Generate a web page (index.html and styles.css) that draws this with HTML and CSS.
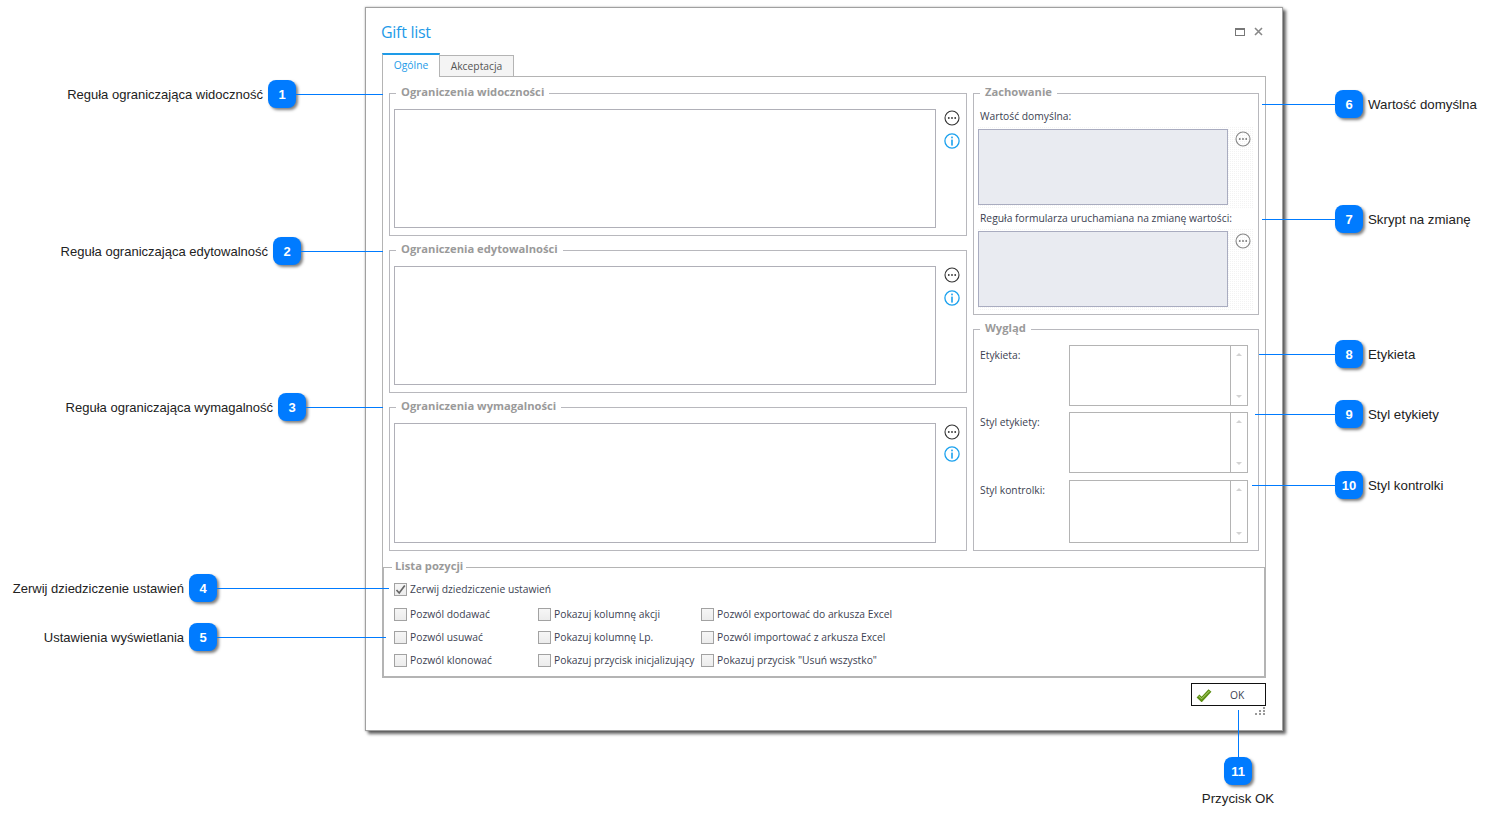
FILE: index.html
```html
<!DOCTYPE html>
<html lang="en">
<head>
    <meta charset="UTF-8">
    <meta name="viewport" content="width=device-width, initial-scale=1.0">
    <title>Gift list</title>
    <link rel="stylesheet" href="styles.css">
</head>
<body>
    <div class="canvas">
        <div class="dialog">
            <div class="dialog-head">
                <h1 class="dialog-title">Gift list</h1>
                <div class="window-buttons">
                    <svg width="10" height="8" viewBox="0 0 10 8"><rect x="0.5" y="0.5" width="9" height="7" fill="none" stroke="#777"/><rect x="0" y="0" width="10" height="2" fill="#777"/></svg>
                    <svg width="9" height="9" viewBox="0 0 9 9"><path d="M1 1 8 8M8 1 1 8" stroke="#888" stroke-width="1.6" fill="none"/></svg>
                </div>
            </div>

            <div class="tabs">
                <div class="tab tab-active">Ogólne</div>
                <div class="tab">Akceptacja</div>
            </div>

            <div class="tab-panel">
                <div class="left-col">
                    <fieldset class="group rule-group">
                        <legend>Ograniczenia widoczności</legend>
                        <div class="rule-row">
                            <div class="rule-box"></div>
                            <div class="rule-icons">
                                <svg width="16" height="16" viewBox="0 0 16 16"><circle cx="8" cy="8" r="7" fill="none" stroke="#333" stroke-width="1.1"/><circle cx="4.8" cy="8" r="0.9" fill="#333"/><circle cx="8" cy="8" r="0.9" fill="#333"/><circle cx="11.2" cy="8" r="0.9" fill="#333"/></svg>
                                <svg width="16" height="16" viewBox="0 0 16 16"><circle cx="8" cy="8" r="7.1" fill="none" stroke="#1ba1ee" stroke-width="1.3"/><rect x="7.2" y="6.6" width="1.6" height="6" fill="#1ba1ee"/><rect x="7.2" y="3.6" width="1.6" height="1.7" fill="#1ba1ee"/></svg>
                            </div>
                        </div>
                    </fieldset>
                    <fieldset class="group rule-group">
                        <legend>Ograniczenia edytowalności</legend>
                        <div class="rule-row">
                            <div class="rule-box"></div>
                            <div class="rule-icons">
                                <svg width="16" height="16" viewBox="0 0 16 16"><circle cx="8" cy="8" r="7" fill="none" stroke="#333" stroke-width="1.1"/><circle cx="4.8" cy="8" r="0.9" fill="#333"/><circle cx="8" cy="8" r="0.9" fill="#333"/><circle cx="11.2" cy="8" r="0.9" fill="#333"/></svg>
                                <svg width="16" height="16" viewBox="0 0 16 16"><circle cx="8" cy="8" r="7.1" fill="none" stroke="#1ba1ee" stroke-width="1.3"/><rect x="7.2" y="6.6" width="1.6" height="6" fill="#1ba1ee"/><rect x="7.2" y="3.6" width="1.6" height="1.7" fill="#1ba1ee"/></svg>
                            </div>
                        </div>
                    </fieldset>
                    <fieldset class="group rule-group rule-group-last">
                        <legend>Ograniczenia wymagalności</legend>
                        <div class="rule-row">
                            <div class="rule-box"></div>
                            <div class="rule-icons">
                                <svg width="16" height="16" viewBox="0 0 16 16"><circle cx="8" cy="8" r="7" fill="none" stroke="#333" stroke-width="1.1"/><circle cx="4.8" cy="8" r="0.9" fill="#333"/><circle cx="8" cy="8" r="0.9" fill="#333"/><circle cx="11.2" cy="8" r="0.9" fill="#333"/></svg>
                                <svg width="16" height="16" viewBox="0 0 16 16"><circle cx="8" cy="8" r="7.1" fill="none" stroke="#1ba1ee" stroke-width="1.3"/><rect x="7.2" y="6.6" width="1.6" height="6" fill="#1ba1ee"/><rect x="7.2" y="3.6" width="1.6" height="1.7" fill="#1ba1ee"/></svg>
                            </div>
                        </div>
                    </fieldset>
                </div>

                <div class="right-col">
                    <fieldset class="group behaviour-group">
                        <legend>Zachowanie</legend>
                        <div class="field-label">Wartość domyślna:</div>
                        <div class="disabled-editor">
                            <div class="disabled-box"></div>
                            <svg width="16" height="16" viewBox="0 0 16 16"><circle cx="8" cy="8" r="7" fill="none" stroke="#888" stroke-width="1.1"/><circle cx="4.8" cy="8" r="0.9" fill="#777"/><circle cx="8" cy="8" r="0.9" fill="#777"/><circle cx="11.2" cy="8" r="0.9" fill="#777"/></svg>
                        </div>
                        <div class="field-label">Reguła formularza uruchamiana na zmianę wartości:</div>
                        <div class="disabled-editor">
                            <div class="disabled-box"></div>
                            <svg width="16" height="16" viewBox="0 0 16 16"><circle cx="8" cy="8" r="7" fill="none" stroke="#888" stroke-width="1.1"/><circle cx="4.8" cy="8" r="0.9" fill="#777"/><circle cx="8" cy="8" r="0.9" fill="#777"/><circle cx="11.2" cy="8" r="0.9" fill="#777"/></svg>
                        </div>
                    </fieldset>
                    <fieldset class="group look-group">
                        <legend>Wygląd</legend>
                        <div class="look-row">
                            <div class="look-label">Etykieta:</div>
                            <div class="memo"><div class="memo-scroll"><i class="arrow-up"></i><i class="arrow-down"></i></div></div>
                        </div>
                        <div class="look-row look-row-mid">
                            <div class="look-label">Styl etykiety:</div>
                            <div class="memo"><div class="memo-scroll"><i class="arrow-up"></i><i class="arrow-down"></i></div></div>
                        </div>
                        <div class="look-row look-row-last">
                            <div class="look-label">Styl kontrolki:</div>
                            <div class="memo"><div class="memo-scroll"><i class="arrow-up"></i><i class="arrow-down"></i></div></div>
                        </div>
                    </fieldset>
                </div>

                <fieldset class="group list-group">
                    <legend>Lista pozycji</legend>
                    <div class="check check-first">
                        <span class="box"><svg width="11" height="11" viewBox="0 0 11 11"><path d="M1.5 6 4.2 9 9.8 1.5" fill="none" stroke="#666" stroke-width="1.7"/></svg></span>Zerwij dziedziczenie ustawień
                    </div>
                    <div class="check-grid">
                        <div class="check"><span class="box"></span>Pozwól dodawać</div>
                        <div class="check"><span class="box"></span>Pokazuj kolumnę akcji</div>
                        <div class="check"><span class="box"></span>Pozwól exportować do arkusza Excel</div>
                        <div class="check"><span class="box"></span>Pozwól usuwać</div>
                        <div class="check"><span class="box"></span>Pokazuj kolumnę Lp.</div>
                        <div class="check"><span class="box"></span>Pozwól importować z arkusza Excel</div>
                        <div class="check"><span class="box"></span>Pozwól klonować</div>
                        <div class="check"><span class="box"></span>Pokazuj przycisk inicjalizujący</div>
                        <div class="check"><span class="box"></span>Pokazuj przycisk "Usuń wszystko"</div>
                    </div>
                </fieldset>
            </div>

            <div class="dialog-foot">
                <div class="ok-button">
                    <svg width="16" height="14" viewBox="0 0 16 14"><path d="M2 8 5.6 11.5 14 2.5" fill="none" stroke="#5d8f14" stroke-width="4"/><path d="M2.6 8 5.6 10.8 13.4 3" fill="none" stroke="#b9d77a" stroke-width="1"/></svg>
                    <span>OK</span>
                </div>
            </div>
            <svg class="grip" width="11" height="8" viewBox="0 0 11 8"><path d="M8 0h2v2H8zM4 3h2v2H4zM8 3h2v2H8zM0 6h2v2H0zM4 6h2v2H4zM8 6h2v2H8z" fill="#999"/></svg>
        </div>

        <!-- callouts -->
        <div class="callout callout-left c1"><span>Reguła ograniczająca widoczność</span><b class="badge">1</b><i class="line"></i></div>
        <div class="callout callout-left c2"><span>Reguła ograniczająca edytowalność</span><b class="badge">2</b><i class="line"></i></div>
        <div class="callout callout-left c3"><span>Reguła ograniczająca wymagalność</span><b class="badge">3</b><i class="line"></i></div>
        <div class="callout callout-left c4"><span>Zerwij dziedziczenie ustawień</span><b class="badge">4</b><i class="line"></i></div>
        <div class="callout callout-left c5"><span>Ustawienia wyświetlania</span><b class="badge">5</b><i class="line"></i></div>
        <div class="callout callout-right c6"><i class="line"></i><b class="badge">6</b><span>Wartość domyślna</span></div>
        <div class="callout callout-right c7"><i class="line"></i><b class="badge">7</b><span>Skrypt na zmianę</span></div>
        <div class="callout callout-right c8"><i class="line"></i><b class="badge">8</b><span>Etykieta</span></div>
        <div class="callout callout-right c9"><i class="line"></i><b class="badge">9</b><span>Styl etykiety</span></div>
        <div class="callout callout-right c10"><i class="line"></i><b class="badge">10</b><span>Styl kontrolki</span></div>
        <div class="callout-down"><i class="line-v"></i><b class="badge">11</b><span>Przycisk OK</span></div>
    </div>
</body>
</html>
```

FILE: styles.css
```css
* {
    box-sizing: border-box;
}
html, body {
    margin: 0;
    padding: 0;
    background: white;
}
.canvas {
    position: relative;
    width: 1494px;
    height: 823px;
    overflow: hidden;
    font-family: "Open Sans", "Liberation Sans", sans-serif;
    font-size: 10.3px;
    color: #3c3f52;
}

/* dialog */
.dialog {
    position: absolute;
    left: 365px;
    top: 7px;
    width: 918px;
    height: 724px;
    padding: 0 16px;
    background: white;
    border: 1px solid #a0a0a0;
    box-shadow: 3px 3px 3px rgba(0,0,0,0.6), 0 0 2px rgba(0,0,0,0.3);
}
.dialog-head {
    display: flex;
    justify-content: space-between;
    align-items: flex-start;
    height: 45px;
}
.dialog-title {
    margin: 13px 0 0 -1px;
    font-size: 16px;
    line-height: 22px;
    font-weight: 400;
    letter-spacing: -0.3px;
    color: #1e9be8;
}
.window-buttons {
    display: flex;
    align-items: center;
    gap: 9px;
    margin: 19px 3px 0 0;
}
.tabs {
    display: flex;
    height: 24px;
}
.tab {
    position: relative;
    margin-top: 2px;
    width: 74px;
    height: 22px;
    text-align: center;
    line-height: 21px;
    color: #555;
    background: #f4f4f4;
    border: 1px solid #b4b4b4;
    border-left: 0;
}
.tab-active {
    z-index: 1;
    margin-top: 0;
    width: 58px;
    height: 24px;
    line-height: 21px;
    color: #1e9be8;
    background: white;
    border: 1px solid #b4b4b4;
    border-top: 2px solid #1e9be8;
    border-bottom: 0;
}
.tab-panel {
    display: grid;
    grid-template-columns: 578px 286px;
    column-gap: 6px;
    height: 602px;
    margin-top: -1px;
    padding: 9px 6px 0;
    border: 1px solid #b4b4b4;
    border-bottom: 0;
}

/* group boxes */
.group {
    margin: 0;
    padding: 0;
    min-width: 0;
    border: 1px solid #b8b8bd;
}
.group legend {
    margin-left: 2px;
    padding: 0 5px 2px;
    font-size: 11.2px;
    line-height: 12px;
    font-weight: 700;
    color: #9a9a9a;
}
.left-col, .right-col {
    display: flex;
    flex-direction: column;
    gap: 7px;
}
.rule-group {
    padding: 9px 6px 7px 4px;
}
.rule-row {
    display: flex;
    gap: 8px;
    height: 119px;
}
.rule-group-last .rule-row {
    height: 120px;
}
.rule-box {
    flex: 1;
    border: 1px solid #b0b0b8;
}
.rule-icons {
    display: flex;
    flex-direction: column;
    gap: 7px;
    padding-top: 1px;
}
.rule-group-last .rule-icons {
    gap: 6px;
}
.rule-icons svg {
    display: block;
}

/* right column */
.behaviour-group {
    padding: 9px 4px 4px;
}
.field-label {
    margin: 0 0 3px 2px;
    line-height: 14px;
    white-space: nowrap;
}
.disabled-editor {
    display: flex;
    gap: 7px;
    height: 82px;
    margin-bottom: 3px;
    padding: 3px;
    padding-left: 0;
    background-color: #fff;
    background-image: linear-gradient(45deg, #f3f3f3 25%, transparent 25%, transparent 75%, #f3f3f3 75%);
    background-size: 2px 2px;
}
.disabled-editor:last-child {
    margin-bottom: 0;
}
.disabled-box {
    width: 250px;
    background: #e9ebf1;
    border: 1px solid #a9acc0;
}
.disabled-editor svg {
    margin-top: 2px;
}
.look-group {
    padding: 9px 10px 7px 4px;
}
.look-row {
    display: flex;
    height: 61px;
    margin-bottom: 6px;
}
.look-row-mid {
    margin-bottom: 7px;
}
.look-row-last {
    height: 63px;
    margin-bottom: 0;
}
.look-label {
    width: 91px;
    padding: 3px 0 0 2px;
    line-height: 14px;
}
.memo {
    flex: 1;
    display: flex;
    justify-content: flex-end;
    border: 1px solid #b4b4b4;
}
.memo-scroll {
    display: flex;
    flex-direction: column;
    justify-content: space-between;
    align-items: center;
    width: 17px;
    padding: 7px 0;
    border-left: 1px solid #b4b4b4;
}
.arrow-up, .arrow-down {
    width: 0;
    height: 0;
    border-left: 3px solid transparent;
    border-right: 3px solid transparent;
}
.arrow-up {
    border-bottom: 3px solid #d2d2d2;
}
.arrow-down {
    border-top: 3px solid #d2d2d2;
}

/* bottom list */
.list-group {
    grid-column: 1 / 3;
    height: 118px;
    margin: 9px -7px 0;
    padding: 8px 10px 0;
    border-color: #b4b4b4;
    border-width: 1px 2px 2px;
}
.list-group legend {
    margin-left: -2px;
    padding: 0 3px 2px;
}
.check {
    display: flex;
    align-items: center;
    gap: 3px;
    height: 14px;
    white-space: nowrap;
}
.check-first {
    margin-bottom: 11px;
}
.check-grid {
    display: grid;
    grid-template-columns: 144px 163px auto;
    row-gap: 9px;
}
.box {
    display: flex;
    align-items: center;
    justify-content: center;
    flex: none;
    width: 13px;
    height: 13px;
    background: linear-gradient(#f6f6f6, #ececec);
    border: 1px solid #a2a2a2;
}

/* footer */
.dialog-foot {
    display: flex;
    justify-content: flex-end;
    margin-top: 5px;
}
.ok-button {
    display: flex;
    align-items: center;
    gap: 18px;
    width: 75px;
    height: 23px;
    padding-left: 4px;
    border: 1.5px solid #111;
}
.grip {
    position: absolute;
    right: 16px;
    top: 699px;
}

/* callouts on the screenshot */
.callout {
    position: absolute;
    display: flex;
    align-items: center;
    height: 28px;
    font-family: "Liberation Sans", Arial, sans-serif;
    font-size: 13px;
    color: #222;
    white-space: nowrap;
}
.callout-left span {
    margin-right: 5px;
}
.callout-right span {
    margin-left: 5px;
    font-size: 13.3px;
}
.badge {
    display: flex;
    align-items: center;
    justify-content: center;
    flex: none;
    width: 28px;
    height: 28px;
    border-radius: 8px;
    background: #007bff;
    box-shadow: 2px 2px 3px rgba(0,0,0,0.5);
    font-size: 13px;
    font-family: "Liberation Sans", Arial, sans-serif;
    font-weight: 700;
    color: white;
}
.line {
    display: block;
    height: 1px;
    background: #007bff;
}
.c1 { top: 80px; right: 1111px; }
.c1 .line { width: 87px; }
.c2 { top: 237px; right: 1111px; }
.c2 .line { width: 82px; }
.c3 { top: 393px; right: 1111px; }
.c3 .line { width: 77px; }
.c4 { top: 574px; right: 1105px; }
.c4 .line { width: 172px; }
.c5 { top: 623px; right: 1108px; }
.c5 .line { width: 169px; }
.c6 { top: 90px; left: 1262px; }
.c6 .line { width: 73px; }
.c7 { top: 205px; left: 1262px; }
.c7 .line { width: 73px; }
.c8 { top: 340px; left: 1259px; }
.c8 .line { width: 76px; }
.c9 { top: 400px; left: 1255px; }
.c9 .line { width: 80px; }
.c10 { top: 471px; left: 1252px; }
.c10 .line { width: 83px; }
.callout-down {
    position: absolute;
    left: 1188px;
    top: 710px;
    width: 100px;
    display: flex;
    flex-direction: column;
    align-items: center;
    font-family: "Liberation Sans", Arial, sans-serif;
    font-size: 13.3px;
    color: #222;
    white-space: nowrap;
}
.line-v {
    display: block;
    width: 1px;
    height: 47px;
    background: #007bff;
}
.callout-down span {
    margin-top: 6px;
}
```
